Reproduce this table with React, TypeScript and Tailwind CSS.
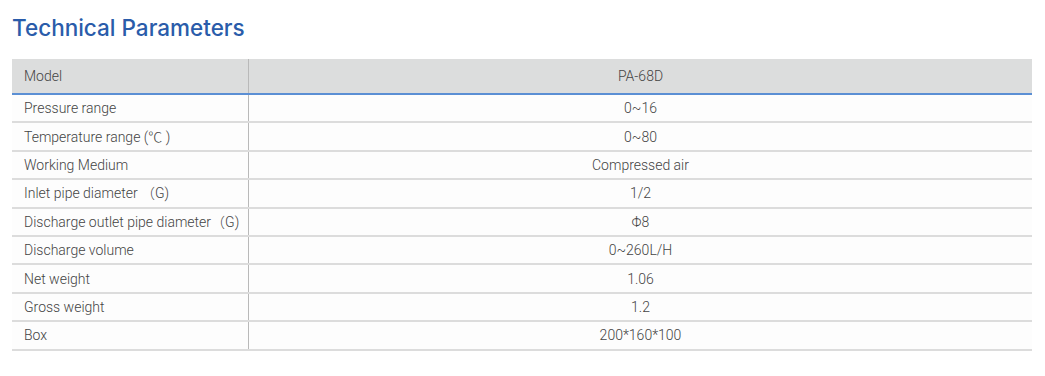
import React from "react";

const rows: [string, string][] = [
  ["Pressure range", "0~16"],
  ["Temperature range (℃ )", "0~80"],
  ["Working Medium", "Compressed air"],
  ["Inlet pipe diameter （G)", "1/2"],
  ["Discharge outlet pipe diameter（G)", "Φ8"],
  ["Discharge volume", "0~260L/H"],
  ["Net weight", "1.06"],
  ["Gross weight", "1.2"],
  ["Box", "200*160*100"],
];

export default function App() {
  return (
    <div className="w-[1045px] h-[376px] bg-white overflow-hidden">
      <h1
        className="pl-[12px] pt-[13px] text-[22.5px] leading-[30px] font-medium text-[#2a5caa]"
        style={{ fontFamily: "Inter, 'Noto Sans', sans-serif" }}
      >
        Technical Parameters
      </h1>
      <div
        className="ml-[12px] mt-[16px] w-[1020px] text-[14px] font-light text-[#444]"
        style={{ fontFamily: "Roboto, 'Noto Sans CJK SC', sans-serif" }}
      >
        <div className="grid grid-cols-[237px_1fr] h-[36px] bg-[#dcdddd] border-b-2 border-[#5b8fd4]">
          <div className="flex items-center pl-[12px] border-r border-[#b9b9b9]">Model</div>
          <div className="flex items-center justify-center">PA-68D</div>
        </div>
        {rows.map(([k, v]) => (
          <div
            key={k}
            className="grid grid-cols-[237px_1fr] h-[28.4px] bg-[#fdfdfd] border-b-2 border-[#dcdcdc]"
          >
            <div className="flex items-center pl-[12px] pt-[1px] border-r border-[#b9b9b9] whitespace-nowrap">{k}</div>
            <div className="flex items-center justify-center pt-[1px]">{v}</div>
          </div>
        ))}
      </div>
    </div>
  );
}
